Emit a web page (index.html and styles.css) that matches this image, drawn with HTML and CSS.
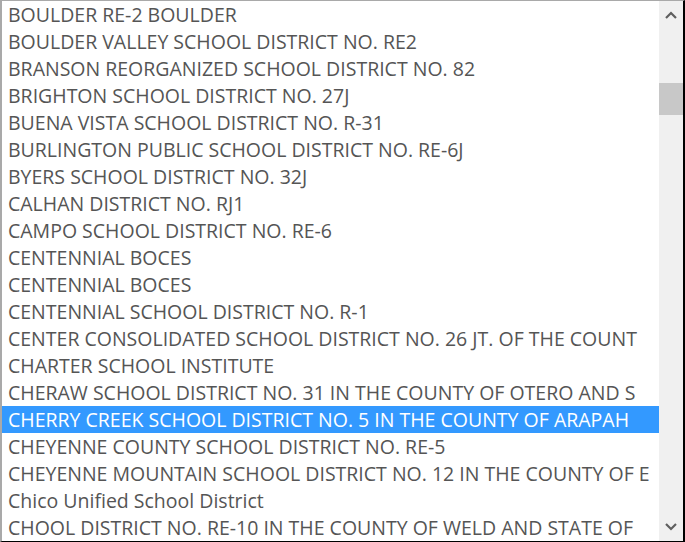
FILE: index.html
```html
<!DOCTYPE html>
<html>
<head>
<meta charset="utf-8">
<link rel="stylesheet" href="styles.css">
</head>
<body>
<div class="box">
  <div class="list">
    <div class="item">BOULDER RE-2 BOULDER</div>
    <div class="item">BOULDER VALLEY SCHOOL DISTRICT NO. RE2</div>
    <div class="item">BRANSON REORGANIZED SCHOOL DISTRICT NO. 82</div>
    <div class="item">BRIGHTON SCHOOL DISTRICT NO. 27J</div>
    <div class="item">BUENA VISTA SCHOOL DISTRICT NO. R-31</div>
    <div class="item">BURLINGTON PUBLIC SCHOOL DISTRICT NO. RE-6J</div>
    <div class="item">BYERS SCHOOL DISTRICT NO. 32J</div>
    <div class="item">CALHAN DISTRICT NO. RJ1</div>
    <div class="item">CAMPO SCHOOL DISTRICT NO. RE-6</div>
    <div class="item">CENTENNIAL BOCES</div>
    <div class="item">CENTENNIAL BOCES</div>
    <div class="item">CENTENNIAL SCHOOL DISTRICT NO. R-1</div>
    <div class="item">CENTER CONSOLIDATED SCHOOL DISTRICT NO. 26 JT. OF THE COUNT</div>
    <div class="item">CHARTER SCHOOL INSTITUTE</div>
    <div class="item">CHERAW SCHOOL DISTRICT NO. 31 IN THE COUNTY OF OTERO AND S</div>
    <div class="item selected">CHERRY CREEK SCHOOL DISTRICT NO. 5 IN THE COUNTY OF ARAPAH</div>
    <div class="item">CHEYENNE COUNTY SCHOOL DISTRICT NO. RE-5</div>
    <div class="item">CHEYENNE MOUNTAIN SCHOOL DISTRICT NO. 12 IN THE COUNTY OF E</div>
    <div class="item">Chico Unified School District</div>
    <div class="item">CHOOL DISTRICT NO. RE-10 IN THE COUNTY OF WELD AND STATE OF</div>
  </div>
  <div class="scrollbar">
    <div class="arrow">
      <svg width="12" height="8" viewBox="0 0 12 8"><path d="M1 7 L6 2 L11 7" fill="none" stroke="#5f5f5f" stroke-width="2.2"/></svg>
    </div>
    <div class="track">
      <div class="thumb"></div>
    </div>
    <div class="arrow">
      <svg width="12" height="8" viewBox="0 0 12 8"><path d="M1 1 L6 6 L11 1" fill="none" stroke="#5f5f5f" stroke-width="2.2"/></svg>
    </div>
  </div>
</div>
</body>
</html>
```
FILE: styles.css
```css
html, body {
  margin: 0;
  padding: 0;
  background: #fff;
}
.box {
  width: 685px;
  height: 542px;
  box-sizing: border-box;
  border-top: 1px solid #a9a9a9;
  border-left: 2px solid #a9a9a9;
  border-right: 2px solid #000;
  border-bottom: 1px solid #000;
  display: flex;
  overflow: hidden;
  font-family: "Open Sans", sans-serif;
  font-size: 19.5px;
  color: #555;
}
.list {
  flex: 1;
  min-width: 0;
  overflow: hidden;
}
.item {
  height: 27px;
  line-height: 27px;
  padding-left: 6px;
  white-space: nowrap;
  overflow: hidden;
}
.item.selected {
  background: #3399ff;
  color: #fff;
}
.scrollbar {
  width: 24px;
  flex: none;
  background: #f0f0f0;
  display: flex;
  flex-direction: column;
}
.arrow {
  height: 28px;
  display: flex;
  align-items: center;
  justify-content: center;
}
.track {
  flex: 1;
  padding-top: 54px;
}
.thumb {
  height: 32px;
  background: #c8c8c8;
}
```
